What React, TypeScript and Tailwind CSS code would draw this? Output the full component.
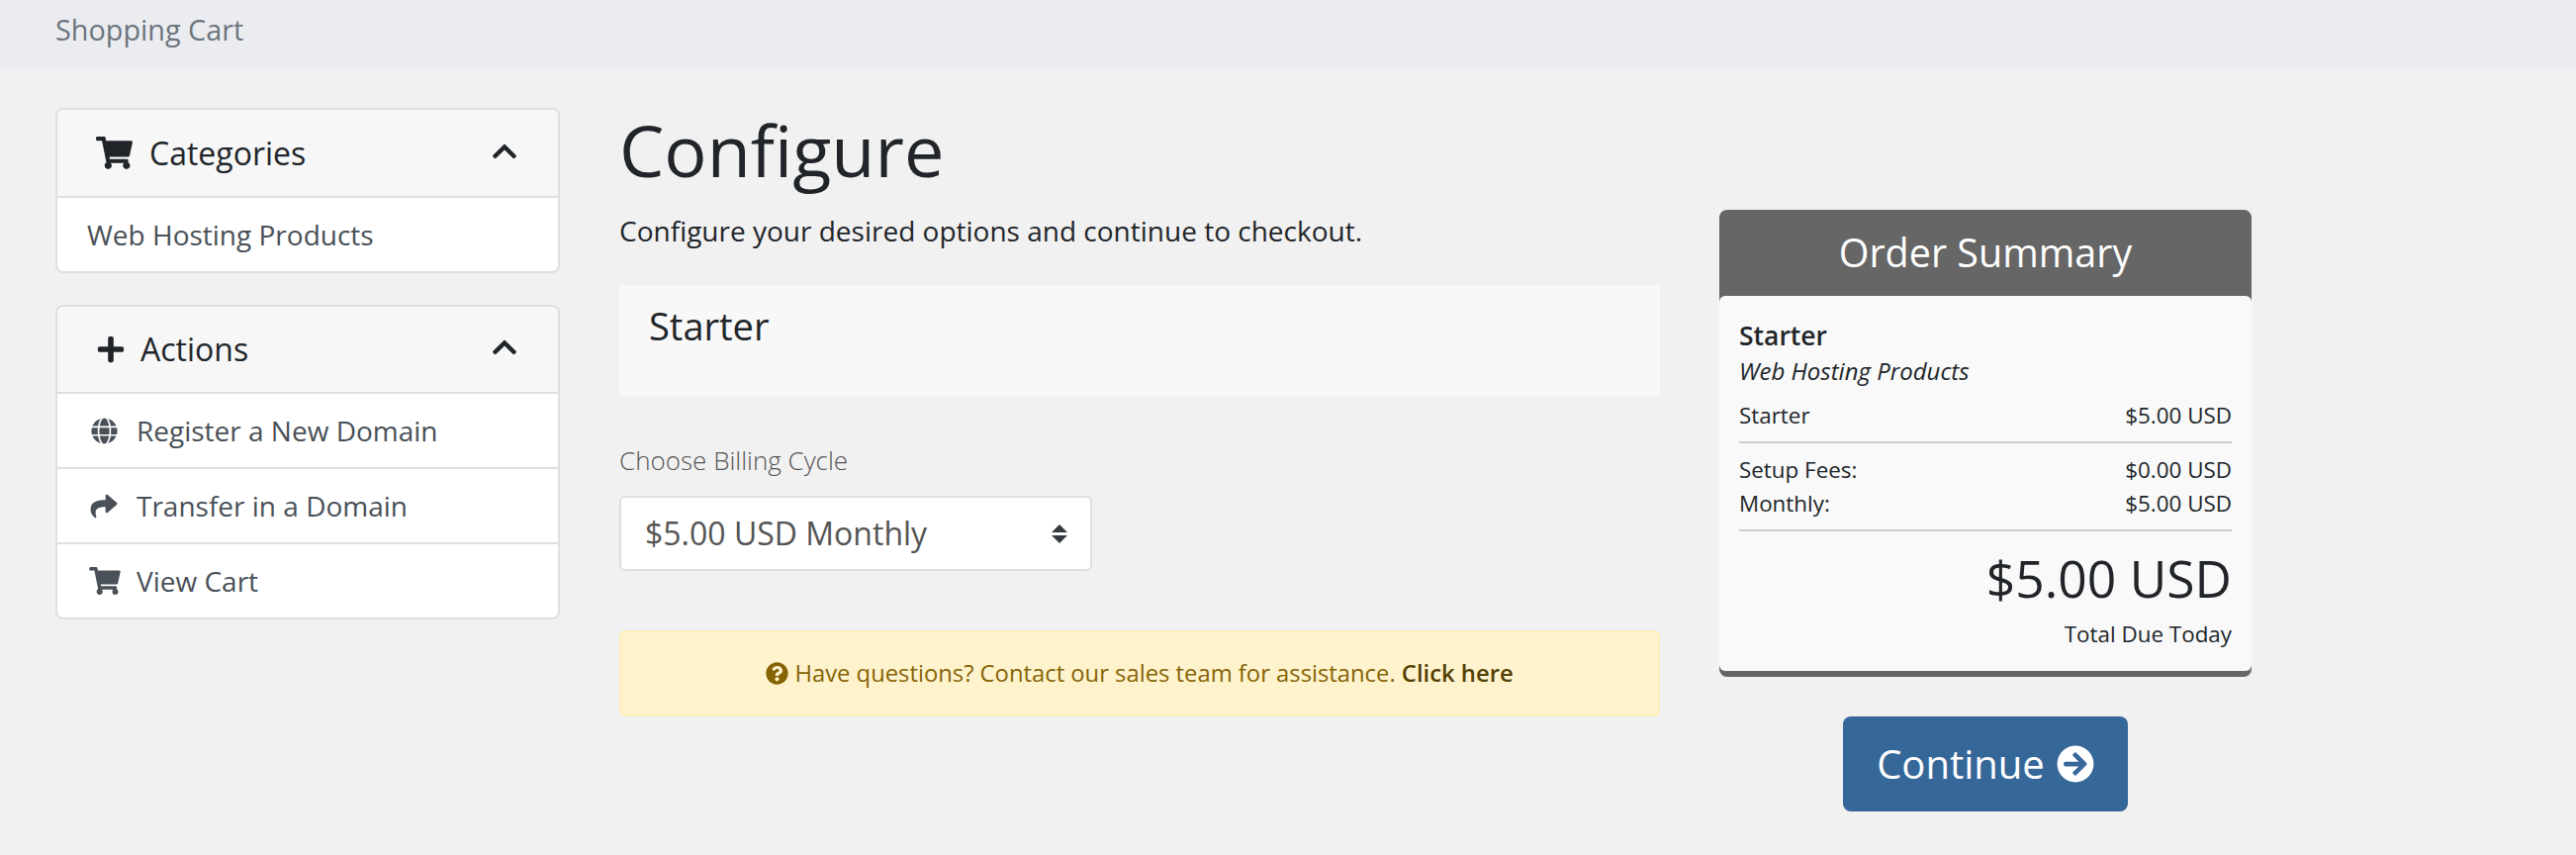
import React from "react";
import { FaShoppingCart, FaPlus, FaGlobe, FaShare, FaChevronUp, FaQuestionCircle, FaArrowCircleRight } from "react-icons/fa";

function PanelHead({ icon, title, gap, height }: { icon: React.ReactNode; title: string; gap: string; height: string }) {
  return (
    <div className={`flex ${height} items-center justify-between rounded-t-[8px] border-b-2 border-[#dfdfdf] bg-[#f7f7f7] pl-[40px] pr-[40px] text-[#212529]`}>
      <div className={`flex items-center ${gap}`}>
        {icon}
        <span className="text-[32px] leading-none">{title}</span>
      </div>
      <FaChevronUp className="mb-[4px] h-[28px] w-[28px]" />
    </div>
  );
}

function Row({ icon, label, height, last }: { icon: React.ReactNode; label: string; height: string; last?: boolean }) {
  return (
    <div className={`flex ${height} items-center pl-[32px] text-[28px] text-[#495057] ${last ? "" : "border-b-2 border-[#dfdfdf]"}`}>
      <span className="flex w-[48px] items-center">{icon}</span>
      <span>{label}</span>
    </div>
  );
}

function Line({ a, b }: { a: string; b: string }) {
  return (
    <div className="flex justify-between text-[22.4px] leading-[34px]">
      <span>{a}</span>
      <span>{b}</span>
    </div>
  );
}

export default function App() {
  return (
    <div className="min-h-[864px] bg-[#f1f1f1] font-['Open_Sans',sans-serif] text-[#212529]">
      <div className="flex h-[70px] items-center bg-[#ebecf0] pb-[10px] pl-[56px] text-[28.8px] text-[#6c757d]">Shopping Cart</div>
      <div className="flex pl-[56px]">
        <aside className="mt-[39px] w-[510px] shrink-0">
          <div className="overflow-hidden rounded-[8px] border-2 border-[#dfdfdf] bg-white">
            <PanelHead height="h-[89px]" icon={<FaShoppingCart className="-ml-[1px] h-[33px] w-[37px]" />} title="Categories" gap="gap-[17px]" />
            <div className="flex h-[74px] items-center pl-[30px] text-[28px] text-[#495057]">Web Hosting Products</div>
          </div>
          <div className="mt-[32px] overflow-hidden rounded-[8px] border-2 border-[#dfdfdf] bg-white">
            <PanelHead height="h-[88px]" icon={<FaPlus className="h-[30px] w-[28px]" />} title="Actions" gap="gap-[16px]" />
            <Row height="h-[76px]" icon={<FaGlobe className="ml-[2px] h-[27px] w-[27px]" />} label="Register a New Domain" />
            <Row height="h-[76px]" icon={<FaShare className="ml-[1px] h-[27px] w-[28px]" />} label="Transfer in a Domain" />
            <Row height="h-[74px]" icon={<FaShoppingCart className="h-[28px] w-[32px]" />} label="View Cart" last />
          </div>
        </aside>
        <main className="ml-[60px] w-[1052px] shrink-0">
          <h1 className="mt-[41px] text-[72px] leading-[80px]">Configure</h1>
          <p className="mt-[22px] text-[28px] leading-[40px]">Configure your desired options and continue to checkout.</p>
          <div className="mt-[35px] h-[113px] bg-[#f8f8f8] pl-[30px] pt-[17px] text-[38px] leading-[48px]">Starter</div>
          <div className="mt-[46px] text-[26px] font-light leading-[36px] text-[#555]">Choose Billing Cycle</div>
          <div className="mt-[18px] flex h-[76px] w-[478px] items-center justify-between rounded-[6px] border-2 border-[#dfdfdf] bg-white pl-[24px] pr-[23px] text-[32px] text-[#555]">
            <span>$5.00 USD Monthly</span>
            <svg width="16" height="19" viewBox="0 0 16 19" fill="#343a40" aria-hidden="true">
              <path d="M8 0l8 8H0zM0 11h16l-8 8z" />
            </svg>
          </div>
          <div className="mt-[60px] flex h-[87px] items-center justify-center gap-[6px] rounded-[6px] border-2 border-[#ffeeba] bg-[#fff3cd] text-[23.8px] text-[#856404]">
            <FaQuestionCircle className="h-[23px] w-[23px]" />
            <span>Have questions? Contact our sales team for assistance. <strong className="font-semibold text-[#533f03]">Click here</strong></span>
          </div>
        </main>
        <section className="ml-[60px] mt-[142px] w-[538px] shrink-0">
          <div className="overflow-hidden rounded-[8px] bg-[#666]">
            <div className="flex h-[87px] items-center justify-center text-[39.5px] text-white">Order Summary</div>
            <div className="mb-[6px] rounded-[6px] bg-[#f9f9f9] px-[20px] pb-[20px] pt-[20px]">
              <div className="text-[26.5px] font-semibold leading-[40px]">Starter</div>
              <div className="text-[24px] italic leading-[32px]">Web Hosting Products</div>
              <div className="mt-[12px] border-b-2 border-[#ccc] pb-[9px]"><Line a="Starter" b="$5.00 USD" /></div>
              <div className="mt-[10px] border-b-2 border-[#ccc] pb-[9px]">
                <Line a="Setup Fees:" b="$0.00 USD" />
                <Line a="Monthly:" b="$5.00 USD" />
              </div>
              <div className="mt-[17px] text-right text-[51.6px] leading-[60px]">$5.00 USD</div>
              <div className="mt-[10px] text-right text-[22.4px] leading-[34px]">Total Due Today</div>
            </div>
          </div>
          <div className="mt-[40px] flex justify-center">
            <div className="flex h-[96px] w-[288px] items-center justify-center gap-[12px] rounded-[8px] bg-[#366799] text-[40px] text-white">
              <span>Continue</span>
              <FaArrowCircleRight className="h-[38px] w-[38px]" />
            </div>
          </div>
        </section>
      </div>
    </div>
  );
}
